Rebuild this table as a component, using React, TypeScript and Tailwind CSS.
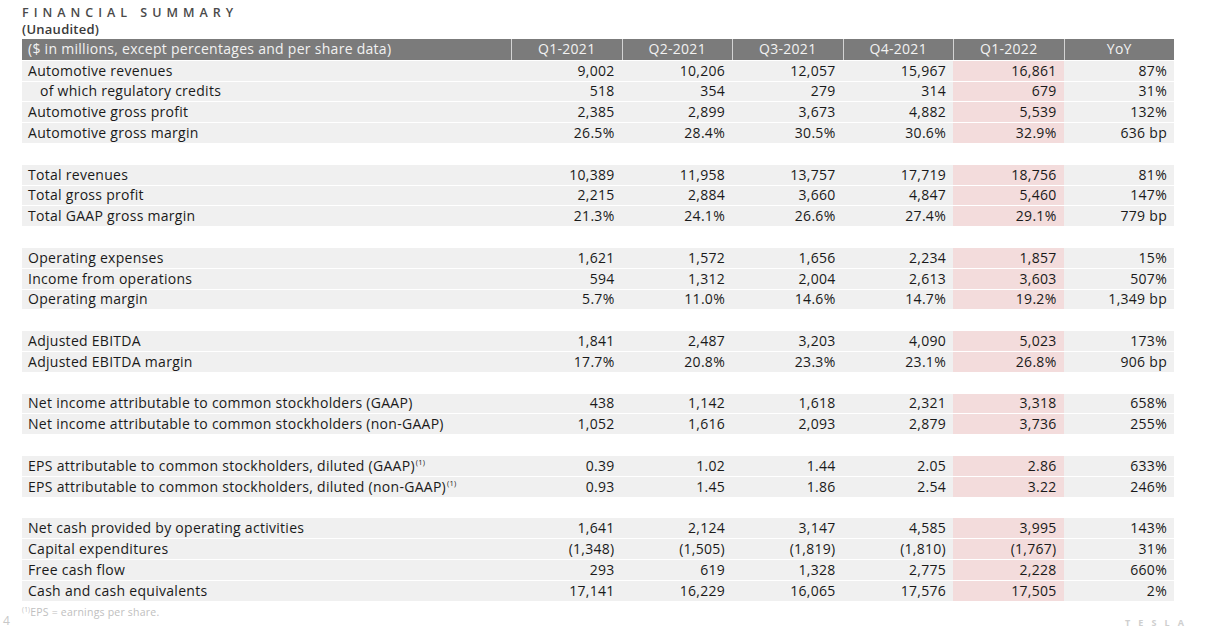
const font = "font-['Open_Sans','Liberation_Sans',sans-serif]";

type Row = { label: string; values: string[]; indent?: boolean; note?: boolean };

const groups: Row[][] = [
  [
    { label: "Automotive revenues", values: ["9,002", "10,206", "12,057", "15,967", "16,861", "87%"] },
    { label: "of which regulatory credits", values: ["518", "354", "279", "314", "679", "31%"], indent: true },
    { label: "Automotive gross profit", values: ["2,385", "2,899", "3,673", "4,882", "5,539", "132%"] },
    { label: "Automotive gross margin", values: ["26.5%", "28.4%", "30.5%", "30.6%", "32.9%", "636 bp"] },
  ],
  [
    { label: "Total revenues", values: ["10,389", "11,958", "13,757", "17,719", "18,756", "81%"] },
    { label: "Total gross profit", values: ["2,215", "2,884", "3,660", "4,847", "5,460", "147%"] },
    { label: "Total GAAP gross margin", values: ["21.3%", "24.1%", "26.6%", "27.4%", "29.1%", "779 bp"] },
  ],
  [
    { label: "Operating expenses", values: ["1,621", "1,572", "1,656", "2,234", "1,857", "15%"] },
    { label: "Income from operations", values: ["594", "1,312", "2,004", "2,613", "3,603", "507%"] },
    { label: "Operating margin", values: ["5.7%", "11.0%", "14.6%", "14.7%", "19.2%", "1,349 bp"] },
  ],
  [
    { label: "Adjusted EBITDA", values: ["1,841", "2,487", "3,203", "4,090", "5,023", "173%"] },
    { label: "Adjusted EBITDA margin", values: ["17.7%", "20.8%", "23.3%", "23.1%", "26.8%", "906 bp"] },
  ],
  [
    { label: "Net income attributable to common stockholders (GAAP)", values: ["438", "1,142", "1,618", "2,321", "3,318", "658%"] },
    { label: "Net income attributable to common stockholders (non-GAAP)", values: ["1,052", "1,616", "2,093", "2,879", "3,736", "255%"] },
  ],
  [
    { label: "EPS attributable to common stockholders, diluted (GAAP)", values: ["0.39", "1.02", "1.44", "2.05", "2.86", "633%"], note: true },
    { label: "EPS attributable to common stockholders, diluted (non-GAAP)", values: ["0.93", "1.45", "1.86", "2.54", "3.22", "246%"], note: true },
  ],
  [
    { label: "Net cash provided by operating activities", values: ["1,641", "2,124", "3,147", "4,585", "3,995", "143%"] },
    { label: "Capital expenditures", values: ["(1,348)", "(1,505)", "(1,819)", "(1,810)", "(1,767)", "31%"] },
    { label: "Free cash flow", values: ["293", "619", "1,328", "2,775", "2,228", "660%"] },
    { label: "Cash and cash equivalents", values: ["17,141", "16,229", "16,065", "17,576", "17,505", "2%"] },
  ],
];

const headers = ["Q1-2021", "Q2-2021", "Q3-2021", "Q4-2021", "Q1-2022", "YoY"];
const grid = "grid grid-cols-[489px_repeat(6,110.5px)]";

function DataRow({ row }: { row: Row }) {
  return (
    <div className={`${grid} h-[20.8px] border-t border-white bg-[#f0f0f0] text-[14px] tracking-[0.02em] text-[#1a1a1a] leading-none`}>
      <div className={`flex items-center ${row.indent ? "pl-[18px]" : "pl-[6px]"}`}>
        {row.label}
        {row.note && <sup className="text-[7.5px] ml-[1px] -top-[4px]">(1)</sup>}
      </div>
      {row.values.map((v, i) => (
        <div key={i} className={`flex items-center justify-end pr-[7px] ${i === 4 ? "bg-[#f3dcdc]" : ""}`}>
          {v}
        </div>
      ))}
    </div>
  );
}

export default function App() {
  return (
    <div className={`${font} relative w-[1211px] h-[626px] overflow-hidden bg-white`}>
      <div className="pl-[22px] pt-[5px] flex flex-col">
        <div className="text-[12.5px] font-semibold tracking-[0.4em] text-[#4a4a4a] leading-[16px]">FINANCIAL SUMMARY</div>
        <div className="text-[13px] font-semibold tracking-[0.02em] text-[#3a3a3a] leading-[16px] mb-[2px]">(Unaudited)</div>
        <div className="w-[1152px] flex flex-col">
          <div className={`${grid} h-[20.8px] bg-[#7b7b7b] text-[14px] tracking-[0.02em] text-[#f2f2f2] leading-none`}>
            <div className="flex items-center pl-[6px]">($ in millions, except percentages and per share data)</div>
            {headers.map((h) => (
              <div key={h} className="flex items-center justify-center border-l border-[#d4d4d4]">{h}</div>
            ))}
          </div>
          {groups.map((g, gi) => (
            <div key={gi} className="flex flex-col">
              {gi > 0 && <div className="h-[20.8px]" />}
              {g.map((r) => (
                <DataRow key={r.label} row={r} />
              ))}
            </div>
          ))}
        </div>
        <div className="mt-[6px] text-[10.5px] tracking-[0.02em] text-[#c0c0c0] leading-none">
          <sup className="text-[6.5px]">(1)</sup>EPS = earnings per share.
        </div>
      </div>
      <div className="absolute left-[3px] top-[612px] text-[12px] text-[#c8c8c8]">4</div>
      <div className="absolute left-[1125px] top-[616px] text-[9px] tracking-[0.9em] text-[#cfcfcf] font-bold">TESLA</div>
    </div>
  );
}
